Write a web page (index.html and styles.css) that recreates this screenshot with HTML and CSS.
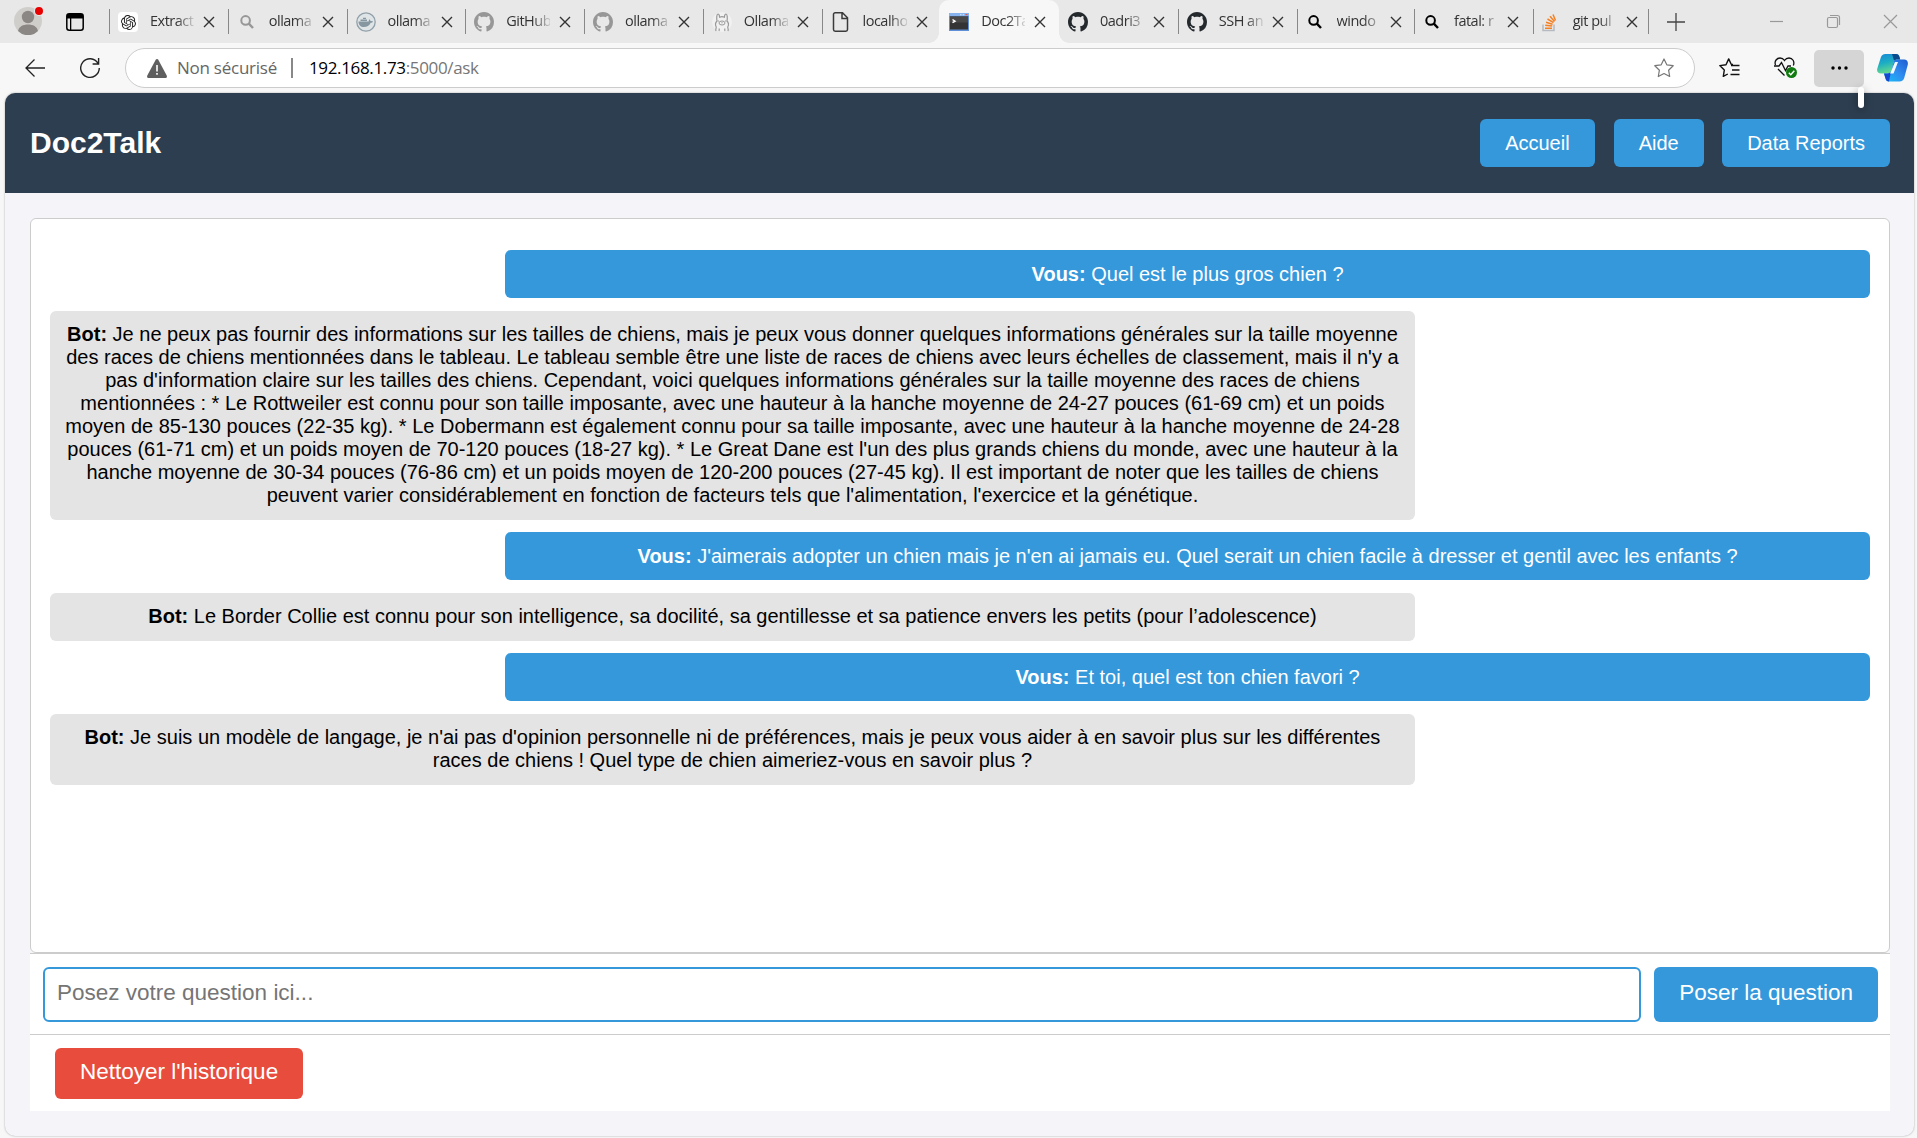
FILE: index.html
```html
<!DOCTYPE html>
<html lang="fr">
<head>
<meta charset="utf-8">
<title>Doc2Talk</title>
<link rel="stylesheet" href="styles.css">
</head>
<body>
<svg class="defs" aria-hidden="true">
  <symbol id="github" viewBox="0 0 16 16"><path d="M8 0C3.58 0 0 3.58 0 8c0 3.54 2.29 6.53 5.47 7.59.4.07.55-.17.55-.38 0-.19-.01-.82-.01-1.49-2.01.37-2.53-.49-2.69-.94-.09-.23-.48-.94-.82-1.13-.28-.15-.68-.52-.01-.53.63-.01 1.08.58 1.23.82.72 1.21 1.87.87 2.33.66.07-.52.28-.87.51-1.07-1.78-.2-3.64-.89-3.64-3.95 0-.87.31-1.59.82-2.15-.08-.2-.36-1.02.08-2.12 0 0 .67-.21 2.2.82.64-.18 1.32-.27 2-.27s1.36.09 2 .27c1.53-1.04 2.2-.82 2.2-.82.44 1.1.16 1.92.08 2.12.51.56.82 1.27.82 2.15 0 3.07-1.87 3.75-3.65 3.95.29.25.54.73.54 1.48 0 1.07-.01 1.93-.01 2.2 0 .21.15.46.55.38A8.01 8.01 0 0 0 16 8c0-4.42-3.58-8-8-8z" fill="currentColor"/></symbol>
  <symbol id="loupe" viewBox="0 0 20 20"><circle cx="8.6" cy="8.4" r="4.3" fill="none" stroke="currentColor" stroke-width="2"/><path d="M11.6 11.4l4.4 4.6" stroke="currentColor" stroke-width="2.4"/></symbol>
  <symbol id="close" viewBox="0 0 12 12"><path d="M1 1l10 10M11 1L1 11" stroke="currentColor" stroke-width="1.4" fill="none"/></symbol>
  <symbol id="openai" viewBox="0 0 24 24"><path fill="#222" d="M22.28 9.82a5.98 5.98 0 0 0-.52-4.91 6.05 6.05 0 0 0-6.51-2.9A6.07 6.07 0 0 0 4.98 4.18a5.98 5.98 0 0 0-4 2.9 6.05 6.05 0 0 0 .75 7.1 5.98 5.98 0 0 0 .51 4.91 6.05 6.05 0 0 0 6.51 2.9A5.98 5.98 0 0 0 13.26 24a6.06 6.06 0 0 0 5.77-4.21 5.99 5.99 0 0 0 4-2.9 6.06 6.06 0 0 0-.75-7.07zm-9.02 12.61a4.48 4.48 0 0 1-2.88-1.04l.14-.08 4.78-2.76a.79.79 0 0 0 .39-.68v-6.74l2.02 1.17.04.05v5.58a4.5 4.5 0 0 1-4.49 4.5zM3.6 18.3a4.47 4.47 0 0 1-.53-3.01l.14.08 4.78 2.76a.77.77 0 0 0 .78 0l5.84-3.37v2.33l-.03.06-4.83 2.79A4.5 4.5 0 0 1 3.6 18.3zM2.34 7.9a4.48 4.48 0 0 1 2.37-1.98v5.68a.77.77 0 0 0 .39.68l5.81 3.35-2.02 1.17h-.07l-4.83-2.79A4.5 4.5 0 0 1 2.34 7.9zm16.6 3.86L13.1 8.36l2.02-1.16h.07l4.83 2.79a4.49 4.49 0 0 1-.68 8.1v-5.68a.79.79 0 0 0-.4-.65zm2.01-3.02l-.14-.09-4.77-2.78a.78.78 0 0 0-.79 0L9.41 9.23V6.9l.03-.06 4.83-2.79a4.5 4.5 0 0 1 6.68 4.69zM8.31 12.86l-2.02-1.16-.04-.06V6.07a4.5 4.5 0 0 1 7.38-3.45l-.14.08-4.78 2.76a.79.79 0 0 0-.39.68zm1.1-2.36L12 9l2.61 1.5v3L12 15l-2.6-1.5z"/></symbol>
</svg>

<header class="tabbar">
  <div class="profile">
    <svg width="32" height="32" viewBox="0 0 32 32"><circle cx="16" cy="18" r="14" fill="#d0cecb"/><circle cx="16" cy="14" r="6.200" fill="#8b8785"/><path d="M6 28c1-4.500 5-6.500 10-6.500s9 2 10 6.500a14 14 0 0 1-20 0z" fill="#8b8785"/><circle cx="27" cy="8" r="5" fill="#e8e8e8"/><circle cx="27" cy="8" r="4" fill="#e80000"/></svg>
  </div>
  <svg class="tabmenu" width="18" height="18" viewBox="0 0 18 18"><rect x=".8" y=".8" width="16.4" height="16.4" rx="2.5" fill="none" stroke="#000" stroke-width="1.5"/><path d="M1 1h16v4.500H1zM4 5h1.300v12H4z"/></svg>
  <nav class="tabs">
    <div class="tab"><span class="fav white"><svg width="15" height="15"><use href="#openai"/></svg></span><span class="label">Extract</span><svg class="x"><use href="#close"/></svg></div>
    <div class="tab dim"><svg class="fav"><use href="#loupe"/></svg><span class="label">ollama</span><svg class="x"><use href="#close"/></svg></div>
    <div class="tab"><svg class="fav" viewBox="0 0 20 20"><circle cx="10" cy="10" r="9.200" fill="#dfe4e7" stroke="#90a0a9" stroke-width="1.300"/><path d="M2.500 9.500h10.200c.3-1 .1-1.700.5-2.300 1 .6 1.300 1.200 1.300 1.900 1-.2 2 0 2.600.4-.5 1-1.300 1.300-2.400 1.300C13.300 14 11 15 8 15c-3.500 0-5.500-2-5.500-5.500zM4.500 7.500h6.500v1.500H4.500zM7 5.800h3v1.200H7z" fill="#8797a1"/></svg><span class="label">ollama</span><svg class="x"><use href="#close"/></svg></div>
    <div class="tab dim"><svg class="fav"><use href="#github"/></svg><span class="label">GitHub</span><svg class="x"><use href="#close"/></svg></div>
    <div class="tab dim"><svg class="fav"><use href="#github"/></svg><span class="label">ollama</span><svg class="x"><use href="#close"/></svg></div>
    <div class="tab"><svg class="fav" viewBox="0 0 20 20"><circle cx="10" cy="10" r="10" fill="#f1f1f1"/><path d="M4 19c-.8-2 .5-3 .2-4-1-2-.7-4.500.8-6C4.500 6 4.600 2 6 2c1 0 1.500 1.500 1.600 3.200 1.500-.6 3.300-.6 4.800 0C12.500 3.500 13 2 14 2c1.400 0 1.500 4 1 7 1.500 1.500 1.800 4 .8 6-.3 1 1 2 .2 4M7 19c.5-1 .2-2 0-2.500M13 19c-.5-1-.2-2 0-2.500" fill="none" stroke="#999" stroke-width="1.200"/><ellipse cx="10" cy="11" rx="3" ry="2" fill="none" stroke="#999"/><path d="M9 10.500h2l-1 1zM5.800 8.500h1v1h-1zM13.200 8.500h1v1h-1z" fill="#888"/></svg><span class="label">Ollama</span><svg class="x"><use href="#close"/></svg></div>
    <div class="tab"><svg class="fav" viewBox="0 0 20 20"><path d="M4.500.8h7l5 5V17.500a1.700 1.700 0 0 1-1.700 1.700H4.200a1.700 1.700 0 0 1-1.700-1.700V2.500A1.700 1.700 0 0 1 4.200.8zM11 1v5.500h5.500" fill="none" stroke="#3b3b3b" stroke-width="1.500"/></svg><span class="label">localho</span><svg class="x"><use href="#close"/></svg></div>
    <div class="tab active"><svg class="fav" viewBox="0 0 20 20"><path d="M0 1h20v18H0z" fill="#5f8fd6"/><path d="M0 1h20v3H0z" fill="#86b2ee"/><path d="M16.500 2h2v1.200h-2z" fill="#e0584c"/><path d="M11 2h1.500v1.200H11zM13.700 2h1.500v1.200h-1.500z" fill="#c7dcf8"/><path d="M1 4.500h18v13H1z" fill="#343434"/><path d="M1 4.500h18v6H1z" fill="#484848"/><path d="M3.500 7.500l2.500 1.700-2.500 1.500" fill="none" stroke="#fff" stroke-width="1.500"/></svg><span class="label">Doc2Ta</span><svg class="x"><use href="#close"/></svg></div>
    <div class="tab bare dark"><svg class="fav"><use href="#github"/></svg><span class="label">0adri3</span><svg class="x"><use href="#close"/></svg></div>
    <div class="tab dark"><svg class="fav"><use href="#github"/></svg><span class="label">SSH an</span><svg class="x"><use href="#close"/></svg></div>
    <div class="tab black narrow"><svg class="fav"><use href="#loupe"/></svg><span class="label">windo</span><svg class="x"><use href="#close"/></svg></div>
    <div class="tab black"><svg class="fav"><use href="#loupe"/></svg><span class="label">fatal: r</span><svg class="x"><use href="#close"/></svg></div>
    <div class="tab"><svg class="fav" viewBox="0 0 20 20"><path d="M2 12.500v6h11v-6" fill="none" stroke="#b5bac0" stroke-width="1.500"/><path d="M4 16.200h7M4.200 13.200l7 .8M5 10.200l6.600 2M6.500 7l6 3.600M9 4.200l4.500 5.200M12 2.500l2.500 6" stroke="#f48024" stroke-width="1.500"/></svg><span class="label">git pul</span><svg class="x"><use href="#close"/></svg></div>
  </nav>
  <svg class="newtab" width="18" height="18" viewBox="0 0 18 18"><path d="M9 0v18M0 9h18" stroke="#444" stroke-width="1.300"/></svg>
  <div class="winctl">
    <svg width="13" height="13" viewBox="0 0 13 13"><path d="M0 6.500h13"/></svg>
    <svg width="13" height="13" viewBox="0 0 13 13"><rect x=".5" y="2.500" width="10" height="10" rx="1.500"/><path d="M3 .5h7.500a2 2 0 0 1 2 2V10"/></svg>
    <svg width="13" height="13" viewBox="0 0 13 13"><path d="M0 0l13 13M13 0L0 13"/></svg>
  </div>
</header>

<div class="toolbar">
  <svg class="back" width="20" height="18" viewBox="0 0 20 18"><path d="M20 9H1M9.500 .5L1 9l8.500 8.500" fill="none" stroke="#222" stroke-width="1.300"/></svg>
  <svg class="reload" width="20" height="22" viewBox="0 0 20 22"><path d="M18 6.300A9.300 9.300 0 1 0 19.300 11M18.600 1v6h-6" fill="none" stroke="#222" stroke-width="1.400"/></svg>
  <div class="address">
    <svg width="20" height="19" viewBox="0 0 20 19"><path d="M10 0c.6 0 1 .3 1.300.8l8.400 15.700c.6 1.200-.1 2.500-1.400 2.500H1.700C.4 19-.3 17.700.3 16.500L8.700.8C9 .3 9.400 0 10 0z" fill="#5f5f5f"/><path d="M9.200 6h1.600v6.500H9.200zM9.200 14h1.600v1.700H9.200z" fill="#fff"/></svg>
    <span class="insecure">Non sécurisé</span>
    <span class="bar"></span>
    <span class="url">192.168.1.73<span class="path">:5000/ask</span></span>
    <svg class="star" width="20" height="20" viewBox="0 0 20 20"><path d="M10 1l2.800 5.800 6.400.9-4.600 4.500 1.100 6.300L10 15.500l-5.700 3 1.100-6.300L.8 7.700l6.400-.9z" fill="none" stroke="#777" stroke-width="1.200" stroke-linejoin="round"/></svg>
  </div>
  <div class="tools">
    <svg class="favs" width="21" height="20" viewBox="0 0 21 20"><path d="M14 6.500L12.200 6.200 9.700.9 7 6.700l-6.200.9 4.500 4.500-1 6.300 4.500-2.400M12 7.500h8.500M13 12h7.500M11.500 16.500h9" fill="none" stroke="#111" stroke-width="1.400" stroke-linejoin="round"/></svg>
    <svg class="health" width="24" height="22" viewBox="0 0 24 22"><path d="M1.500 8C0 4 3 1 6 1c2 0 3.500 1 4.500 2.500C11.500 2 13 1 15 1c3.500 0 6 3.500 4.300 7.500M0 9h5l2.500-3.500 4 8L14 9h3M4 12l6.500 6.500" fill="none" stroke="#111" stroke-width="1.300"/><circle cx="17.500" cy="15.500" r="5.500" fill="#107c10"/><path d="M14.800 15.700l2 2 3.500-4" fill="none" stroke="#fff" stroke-width="1.400"/></svg>
    <span class="more"><svg width="17" height="4" viewBox="0 0 17 4"><circle cx="2" cy="2" r="1.700"/><circle cx="8.500" cy="2" r="1.700"/><circle cx="15" cy="2" r="1.700"/></svg><i class="handle"></i></span>
    <svg class="copilot" width="31" height="28" viewBox="0 0 31 28"><defs><linearGradient id="g1" x1="0" y1="0" x2=".3" y2="1"><stop offset="0" stop-color="#1787d8"/><stop offset=".5" stop-color="#1cadc4"/><stop offset="1" stop-color="#63d98d"/></linearGradient><linearGradient id="g2" x1="1" y1="0" x2="0" y2="1"><stop offset="0" stop-color="#1c5bd0"/><stop offset=".5" stop-color="#2f8cf0"/><stop offset="1" stop-color="#18c0f5"/></linearGradient></defs><path d="M8.500 0H19c2 0 3 1.200 3.500 3l.7 2.500h-3c-2 0-3 1-3.500 2.800l-2.200 8c-.6 2-1.800 3.200-3.800 3.200H4c-3 0-4.500-2-3.700-5L3.800 3.500C4.500 1.300 6 0 8.500 0z" fill="url(#g1)"/><path d="M15 0h4c2 0 3 1.200 3.500 3l.7 2.500h-3c-1.500 0-2.500.5-3 1.500z" fill="#0c4a8c"/><path d="M22.500 27.500H12c-2 0-3-1.200-3.500-3L7 19.500h3.500c2 0 3.200-1.200 3.800-3.200l2.200-8c.5-1.800 1.500-2.800 3.500-2.800h7c3 0 4.500 2.500 3.700 5.500L27.200 24c-.7 2.200-2.200 3.500-4.700 3.500z" fill="url(#g2)"/><path d="M7 19.500h3.500c2 0 3-1 3.600-2.500L12 27.500c-2 0-3-1.200-3.500-3z" fill="#1549cf"/><path d="M18 8l3 0-4.500 11.500h-3.500l1.500-3.200z" fill="#f2f9ff"/></svg>
  </div>
</div>

<main class="page">
  <div class="header">
    <h1>Doc2Talk</h1>
    <nav class="links"><a>Accueil</a><a>Aide</a><a>Data Reports</a></nav>
  </div>
  <div class="content">
    <section class="chat">
      <p class="msg user"><strong>Vous:</strong> Quel est le plus gros chien ?</p>
      <p class="msg bot"><strong>Bot:</strong> Je ne peux pas fournir des informations sur les tailles de chiens, mais je peux vous donner quelques informations générales sur la taille moyenne des races de chiens mentionnées dans le tableau. Le tableau semble être une liste de races de chiens avec leurs échelles de classement, mais il n'y a pas d'information claire sur les tailles des chiens. Cependant, voici quelques informations générales sur la taille moyenne des races de chiens mentionnées : * Le Rottweiler est connu pour son taille imposante, avec une hauteur à la hanche moyenne de 24-27 pouces (61-69 cm) et un poids moyen de 85-130 pouces (22-35 kg). * Le Dobermann est également connu pour sa taille imposante, avec une hauteur à la hanche moyenne de 24-28 pouces (61-71 cm) et un poids moyen de 70-120 pouces (18-27 kg). * Le Great Dane est l'un des plus grands chiens du monde, avec une hauteur à la hanche moyenne de 30-34 pouces (76-86 cm) et un poids moyen de 120-200 pouces (27-45 kg). Il est important de noter que les tailles de chiens peuvent varier considérablement en fonction de facteurs tels que l'alimentation, l'exercice et la génétique.</p>
      <p class="msg user"><strong>Vous:</strong> J'aimerais adopter un chien mais je n'en ai jamais eu. Quel serait un chien facile à dresser et gentil avec les enfants ?</p>
      <p class="msg bot"><strong>Bot:</strong> Le Border Collie est connu pour son intelligence, sa docilité, sa gentillesse et sa patience envers les petits (pour l’adolescence)</p>
      <p class="msg user"><strong>Vous:</strong> Et toi, quel est ton chien favori ?</p>
      <p class="msg bot"><strong>Bot:</strong> Je suis un modèle de langage, je n'ai pas d'opinion personnelle ni de préférences, mais je peux vous aider à en savoir plus sur les différentes races de chiens ! Quel type de chien aimeriez-vous en savoir plus ?</p>
    </section>
    <form class="ask">
      <input type="text" placeholder="Posez votre question ici...">
      <button type="button">Poser la question</button>
    </form>
    <div class="clear"><button type="button">Nettoyer l'historique</button></div>
  </div>
</main>
</body>
</html>
```
FILE: styles.css
```css
* { box-sizing: border-box; }
html, body { height: 100%; }
body {
  margin: 0;
  background: #f7f7f7;
  font-family: "Liberation Sans", Arial, sans-serif;
  font-size: 20px;
  display: flex;
  flex-direction: column;
  overflow: hidden;
}
.defs { position: absolute; width: 0; height: 0; }
svg { flex: none; display: block; }

/* Tab strip */
.tabbar {
  height: 43px;
  flex: none;
  background: #e8e8e8;
  display: flex;
  align-items: center;
  padding-left: 12px;
}
.profile { width: 54px; height: 38px; }
.tabmenu { margin-right: 24px; }
.tabs { display: flex; align-self: stretch; }
.tab {
  width: 118.75px;
  display: flex;
  align-items: center;
  position: relative;
  padding: 1px 0 0 10px;
  color: #333;
}
.tab::before {
  content: "";
  position: absolute;
  left: 1px;
  top: 9px;
  width: 1px;
  height: 25px;
  background: #888;
}
.tab.bare::before { display: none; }
.tab.narrow { width: 117.5px; }
.tab:last-child { width: 116.5px; }
.tab:last-child::after {
  content: "";
  position: absolute;
  right: -1px;
  top: 9px;
  width: 1px;
  height: 25px;
  background: #888;
}
.fav { width: 20px; height: 20px; margin-right: 12px; flex: none; }
.fav.white { background: #fff; border-radius: 4px; display: grid; place-items: center; }
.dim .fav { color: #979797; }
.dark .fav { color: #24292e; }
.black { padding-left: 9px; }
.black .fav { color: #000; }
.tab:last-child { padding-left: 9px; }
.label {
  font: 14.5px/22px "Open Sans", "Noto Sans", sans-serif;
  letter-spacing: -0.5px;
  width: 44px;
  margin-top: -2px;
  white-space: nowrap;
  -webkit-mask-image: linear-gradient(90deg, #000 60%, rgba(0, 0, 0, .15));
  mask-image: linear-gradient(90deg, #000 60%, rgba(0, 0, 0, .15));
}
.x { width: 12px; height: 12px; margin-left: 9px; color: #333; }
.tab.active { background: #f7f7f7; border-radius: 10px 10px 0 0; width: 120px; margin-right: -1.25px; }
.tab.active::before, .tab.active::after {
  content: "";
  position: absolute;
  display: block;
  top: auto;
  bottom: 0;
  width: 10px;
  height: 10px;
}
.tab.active::before { left: -10px; background: radial-gradient(circle at 0 0, transparent 9.5px, #f7f7f7 10px); }
.tab.active::after { right: -10px; background: radial-gradient(circle at 100% 0, transparent 9.5px, #f7f7f7 10px); }
.newtab { margin-left: 19px; }
.winctl { margin-left: auto; display: flex; gap: 44px; padding-right: 20px; }
.winctl svg { fill: none; stroke: #999; stroke-width: 1.2; overflow: visible; }

/* Address toolbar */
.toolbar { height: 50px; flex: none; display: flex; align-items: center; padding-left: 25px; }
.reload { margin-left: 35px; }
.address {
  margin-left: 25px;
  width: 1570px;
  height: 40px;
  border: 1px solid #ccc;
  border-radius: 20px;
  background: #fff;
  display: flex;
  align-items: center;
  padding: 0 20px 0 21px;
  font: 17px/24px "Open Sans", "Noto Sans", sans-serif;
}
.insecure { margin-left: 10px; width: 114px; color: #666; letter-spacing: -0.25px; white-space: nowrap; }
.bar { width: 2px; height: 20px; background: #888; }
.url { margin-left: 16px; color: #000; letter-spacing: -0.35px; }
.path { color: #767676; }
.star { margin-left: auto; }
.tools { display: flex; align-items: center; }
.favs { margin-left: 24px; }
.health { margin-left: 34px; }
.more {
  position: relative;
  margin-left: 16px;
  width: 50px;
  height: 37px;
  border-radius: 5px;
  background: #d5d5d5;
  display: grid;
  place-items: center;
}
.handle {
  position: absolute;
  z-index: 2;
  right: 0;
  top: 37px;
  width: 6px;
  height: 21px;
  border-radius: 3px;
  background: #fff;
  box-shadow: 0 2px 10px rgba(0, 0, 0, .35);
}
.copilot { margin-left: 13px; }

/* Web page */
.page {
  flex: none;
  height: 1043px;
  margin: 0 3px 0 5px;
  border-radius: 10px;
  background: #f4f4f9;
  box-shadow: 0 0 2px rgba(0, 0, 0, .35);
  overflow: hidden;
}
.header {
  height: 100px;
  padding: 0 24px 0 25px;
  background: #2c3e50;
  color: #fff;
  display: flex;
  align-items: center;
  justify-content: space-between;
}
.header h1 { margin: 0 0 1px; font-size: 30px; }
.links { display: flex; gap: 18.5px; }
.links a { padding: 13px 25px 12px; background: #3498db; border-radius: 6px; line-height: 23px; }
.links a:first-child { padding: 13px 25.5px 12px; }
.content { padding: 25px 24px 0 25px; }
.chat {
  height: 735px;
  border: 1px solid #ccc;
  border-radius: 6px;
  background: #fff;
  padding: 31.25px 18.75px 0;
  display: flex;
  flex-direction: column;
  gap: 12.5px;
  text-align: center;
}
.msg { margin: 0; width: 75%; padding: 12.5px; border-radius: 6px; line-height: 23px; }
.user { align-self: flex-end; background: #3498db; color: #fff; }
.bot { background: #e4e4e4; color: #000; }
.ask {
  height: 81px;
  border-top: 1px solid #ccc;
  background: #fff;
  padding: 13px 12px 12px 13px;
  display: flex;
  gap: 13px;
}
input, button { font: 22.5px/26px "Liberation Sans", Arial, sans-serif; border-radius: 6px; }
input {
  flex: 1;
  height: 55px;
  border: 2px solid #3498db;
  padding: 0 12px 3px;
  outline: none;
}
input::placeholder { color: #757575; }
button { border: 0; padding: 11px 25px 14px; color: #fff; }
.ask button { height: 55px; background: #3498db; padding: 0 25px 3px; }
.clear { border-top: 1px solid #ccc; background: #fff; padding: 13px 25px 12px; height: 77px; }
.clear button { background: #e74c3c; height: 51px; display: block; }
```
